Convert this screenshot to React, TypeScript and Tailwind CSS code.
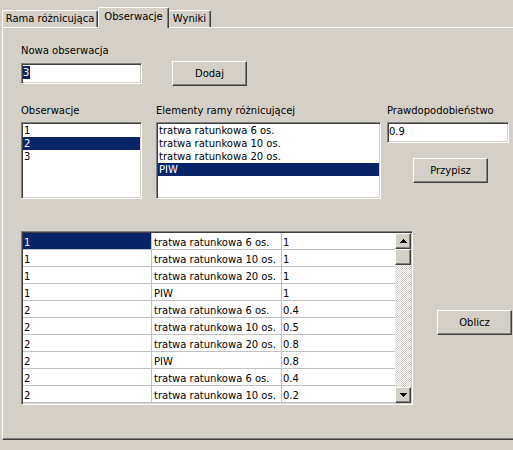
import React from 'react';

const raised =
  'border border-t-white border-l-white border-r-[#404040] border-b-[#404040] shadow-[inset_-1px_-1px_#808080] bg-[#d4d0c8]';
const sunken =
  'border border-t-[#808080] border-l-[#808080] border-r-white border-b-white shadow-[inset_1px_1px_#404040,inset_-1px_-1px_#d4d0c8] p-px bg-white';

const Button = ({ label, className }: { label: string; className: string }) => (
  <div className={`${raised} w-[75px] h-[25px] shrink-0 flex items-center justify-center ${className}`}>
    {label}
  </div>
);

const ListBox = ({ items, selected, className }: { items: string[]; selected: number; className: string }) => (
  <div className={`${sunken} h-[77px] overflow-hidden ${className}`}>
    {items.map((it, i) => (
      <div
        key={i}
        className={`h-[13px] pl-px whitespace-nowrap ${i === selected ? 'bg-[#0a246a] text-white' : ''}`}
      >
        {it}
      </div>
    ))}
  </div>
);

const Arrow = ({ down }: { down?: boolean }) => (
  <svg width="7" height="4" viewBox="0 0 7 4" shapeRendering="crispEdges">
    <path d={down ? 'M0 0H7L3.5 4Z' : 'M3.5 0L7 4H0Z'} fill="#000" />
  </svg>
);

const rows: [string, string, string][] = [
  ['1', 'tratwa ratunkowa 6 os.', '1'],
  ['1', 'tratwa ratunkowa 10 os.', '1'],
  ['1', 'tratwa ratunkowa 20 os.', '1'],
  ['1', 'PIW', '1'],
  ['2', 'tratwa ratunkowa 6 os.', '0.4'],
  ['2', 'tratwa ratunkowa 10 os.', '0.5'],
  ['2', 'tratwa ratunkowa 20 os.', '0.8'],
  ['2', 'PIW', '0.8'],
  ['2', 'tratwa ratunkowa 6 os.', '0.4'],
  ['2', 'tratwa ratunkowa 10 os.', '0.2'],
];

const Grid = () => (
  <div className={`${sunken} w-[392px] h-[174px] flex shrink-0`}>
    <div className="w-[372px] flex flex-col">
      {rows.map((r, i) => (
        <div key={i} className="h-[17px] flex border-b border-[#c0c0c0]">
          <div
            className={`w-[129px] pl-px pt-[3px] border-r border-[#c0c0c0] ${
              i === 0 ? 'bg-[#0a246a] text-white' : ''
            }`}
          >
            {r[0]}
          </div>
          <div className="w-[130px] pl-[2px] pt-[3px] border-r border-[#c0c0c0] whitespace-nowrap">{r[1]}</div>
          <div className="flex-1 pl-px pt-[3px]">{r[2]}</div>
        </div>
      ))}
    </div>
    <div className="w-[16px] flex flex-col">
      <div className={`${raised} h-[16px] flex items-center justify-center`}>
        <Arrow />
      </div>
      <div className={`${raised} h-[16px]`} />
      <div className="flex-1 bg-[repeating-conic-gradient(#ffffff_0%_25%,#d4d0c8_0%_50%)] bg-[length:2px_2px]" />
      <div className={`${raised} h-[16px] flex items-center justify-center`}>
        <Arrow down />
      </div>
    </div>
  </div>
);

export default function App() {
  return (
    <div className="w-[513px] h-[450px] overflow-hidden bg-[#d4d0c8] text-black text-[10px] leading-[13px] font-['DejaVu_Sans',Verdana,sans-serif]">
      {/* tabs */}
      <div className="h-[27px] pl-[2px] flex items-end">
        <div className="w-[96px] h-[17px] pt-px flex justify-center border-l border-t border-r border-l-white border-t-white border-r-[#404040] shadow-[inset_-1px_0_#808080] rounded-t-[2px]">
          Rama różnicująca
        </div>
        <div className="relative z-10 w-[71px] h-[21px] mb-[-1px] pt-[2px] flex justify-center bg-[#d4d0c8] border-l border-t border-r border-l-white border-t-white border-r-[#404040] shadow-[inset_-1px_0_#808080] rounded-t-[2px]">
          Obserwacje
        </div>
        <div className="w-[42px] h-[17px] pt-px flex justify-center border-t border-r border-t-white border-r-[#404040] shadow-[inset_-1px_0_#808080] rounded-t-[2px]">
          Wyniki
        </div>
      </div>

      {/* panel */}
      <div className="ml-[2px] w-[511px] h-[413px] border-l border-t border-b border-l-white border-t-white border-b-[#404040] shadow-[inset_0_-1px_#808080] pl-[18px]">
        <div className="mt-[16px] flex items-start">
          <div className="flex flex-col">
            <div className="h-[13px]">Nowa obserwacja</div>
            <div className={`${sunken} mt-[6px] w-[121px] h-[21px] pt-[2px]`}>
              <span className="inline-block w-[7px] bg-[#0a246a] text-white">3</span>
            </div>
          </div>
          <Button label="Dodaj" className="ml-[30px] mt-[17px]" />
        </div>

        <div className="mt-[18px] flex items-start">
          <div className="flex flex-col">
            <div className="h-[13px]">Obserwacje</div>
            <ListBox items={['1', '2', '3']} selected={1} className="mt-[5px] w-[121px]" />
          </div>
          <div className="ml-[14px] flex flex-col">
            <div className="h-[13px]">Elementy ramy różnicującej</div>
            <ListBox
              items={['tratwa ratunkowa 6 os.', 'tratwa ratunkowa 10 os.', 'tratwa ratunkowa 20 os.', 'PIW']}
              selected={3}
              className="mt-[5px] w-[225px]"
            />
          </div>
          <div className="ml-[6px] flex flex-col">
            <div className="h-[13px]">Prawdopodobieństwo</div>
            <div className={`${sunken} mt-[5px] w-[122px] h-[21px] pt-[2px]`}>0.9</div>
            <Button label="Przypisz" className="ml-[26px] mt-[15px]" />
          </div>
        </div>

        <div className="mt-[32px] flex items-start">
          <Grid />
          <Button label="Oblicz" className="ml-[24px] mt-[79px]" />
        </div>
      </div>
    </div>
  );
}
